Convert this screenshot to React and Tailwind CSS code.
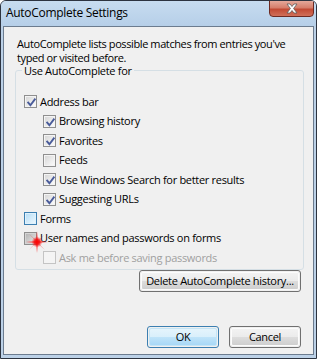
import React from 'react';

const Check = () => (
    <svg width="11" height="11" viewBox="0 0 11 11" className="absolute left-0 top-0">
        <path d="M2.2 5.6 L4.4 8.2 L8.8 2.4" fill="none" stroke="#4a5c9a" strokeWidth="1.9" strokeLinecap="square" />
    </svg>
);

const Box = ({ checked, variant }) => {
    const outer =
        variant === 'hover'
            ? 'border-[#3c7fb1]'
            : variant === 'disabled'
            ? 'border-[#c4c4c4]'
            : 'border-[#8f8f8f]';
    const inner =
        variant === 'hover'
            ? 'bg-gradient-to-br from-[#b9dff7] to-[#e9f6fd] border-[#dff1fc]'
            : variant === 'pressed'
            ? 'bg-gradient-to-br from-[#b5b5b5] to-[#e6e6e6] border-[#d4d4d4]'
            : variant === 'disabled'
            ? 'bg-[#f4f4f4] border-[#f4f4f4]'
            : 'bg-gradient-to-br from-[#d8d8d8] to-[#fafafa] border-[#f4f4f4]';
    return (
        <div className={`w-[13px] h-[13px] border ${outer} bg-white shrink-0`}>
            <div className={`relative w-[11px] h-[11px] border ${inner}`}>
                {checked && <Check />}
            </div>
        </div>
    );
};

const Row = ({ label, checked, indent, variant, spark }) => (
    <div className={`relative flex items-center h-[19.5px] ${indent ? 'pl-[27px]' : 'pl-[8px]'}`}>
        <Box checked={checked} variant={variant} />
        <span className={`ml-[3px] whitespace-nowrap ${variant === 'disabled' ? 'text-[#a0a0a0]' : 'text-black'}`}>
            {label}
        </span>
        {spark && (
            <svg width="24" height="24" viewBox="0 0 24 24" className="absolute left-[9px] top-[1px]">
                <defs>
                    <radialGradient id="sp">
                        <stop offset="0" stopColor="#ff0000" />
                        <stop offset="0.5" stopColor="#f01010" stopOpacity="0.85" />
                        <stop offset="1" stopColor="#ff3030" stopOpacity="0" />
                    </radialGradient>
                </defs>
                <path d="M12 1 L13 11 L23 12 L13 13 L12 23 L11 13 L1 12 L11 11 Z" fill="#ff1a1a" opacity="0.75" />
                <path d="M4 4 L12.6 11.4 L20 4 L12.6 12.6 L20 20 L11.4 12.6 L4 20 L11.4 11.4 Z" fill="#ff1a1a" opacity="0.5" />
                <circle cx="12" cy="12" r="5.5" fill="url(#sp)" />
            </svg>
        )}
    </div>
);

const Button = ({ children, primary, className = '' }) => (
    <div
        className={`h-[22px] rounded-[3px] border ${
            primary ? 'border-[#3c7fb1]' : 'border-[#707070]'
        } p-px ${className}`}
    >
        <div
            className={`h-full rounded-[2px] flex items-center justify-center whitespace-nowrap ${
                primary
                    ? 'bg-[linear-gradient(#e5f4fc_0%,#d9effb_50%,#c0e4f9_50%,#a8d8f6_100%)] border border-[#c4e5f6]'
                    : 'bg-[linear-gradient(#f2f2f2_0%,#ebebeb_50%,#dddddd_50%,#cfcfcf_100%)] border border-[#fcfcfc]'
            }`}
        >
            {children}
        </div>
    </div>
);

export default function App() {
    return (
        <div
            className="w-[317px] h-[359px] bg-[#bcd1e7] border border-[#2d3440] rounded-t-[6px] flex flex-col text-[11px] tracking-[-0.3px] leading-[14px] text-black overflow-hidden"
            style={{ fontFamily: '"Open Sans", "Noto Sans", sans-serif' }}
        >
            <div className="h-[25px] flex items-start shrink-0 bg-[linear-gradient(180deg,#c7dcf0,#b6cfe8)]">
                <div className="pl-[5px] pt-[5px] text-[12px] text-black whitespace-nowrap">AutoComplete Settings</div>
                <div className="ml-auto mr-[2px] w-[45px] h-[17px] -mt-px rounded-b-[4px] border border-[#6d2a22] bg-[linear-gradient(#e5a89a_0%,#d67e6b_45%,#c24a34_55%,#d0705a_100%)] flex items-center justify-center">
                    <svg width="14" height="11" viewBox="0 0 14 11">
                        <path
                            d="M2 1 L5 1 L7 3.5 L9 1 L12 1 L8.6 5.5 L12 10 L9 10 L7 7.5 L5 10 L2 10 L5.4 5.5 Z"
                            fill="#ffffff"
                            stroke="#5a5a5a"
                            strokeWidth="0.8"
                        />
                    </svg>
                </div>
            </div>
            <div className="flex-1 mx-[2px] mb-[3px] border border-[#6c7c8f] bg-[#f0f0f0] flex flex-col pt-[10px] pl-[11px] pr-[9px] pb-[6px]">
                <p className="pl-[2px] leading-[14px] whitespace-nowrap tracking-[-0.4px]">
                    AutoComplete lists possible matches from entries you've
                    <br />
                    typed or visited before.
                </p>
                <fieldset className="border border-[#d5dfe5] rounded-[3px] px-0 pb-0">
                    <legend className="ml-[6px] px-[2px] leading-[11px] whitespace-nowrap">Use AutoComplete for</legend>
                    <div className="pt-[16px] pb-[1px]">
                        <Row label="Address bar" checked />
                        <Row label="Browsing history" checked indent />
                        <Row label="Favorites" checked indent />
                        <Row label="Feeds" indent />
                        <Row label="Use Windows Search for better results" checked indent />
                        <Row label="Suggesting URLs" checked indent />
                        <Row label="Forms" variant="hover" />
                        <Row label="User names and passwords on forms" variant="pressed" spark />
                        <Row label="Ask me before saving passwords" indent variant="disabled" />
                    </div>
                </fieldset>
                <div className="flex justify-end pr-[3px]">
                    <Button className="w-[162px]">Delete AutoComplete history...</Button>
                </div>
                <div className="mt-auto flex justify-end gap-[10px] pr-[3px]">
                    <Button primary className="w-[72px] h-[21px]">OK</Button>
                    <Button className="w-[72px] h-[21px]">Cancel</Button>
                </div>
            </div>
        </div>
    );
}
